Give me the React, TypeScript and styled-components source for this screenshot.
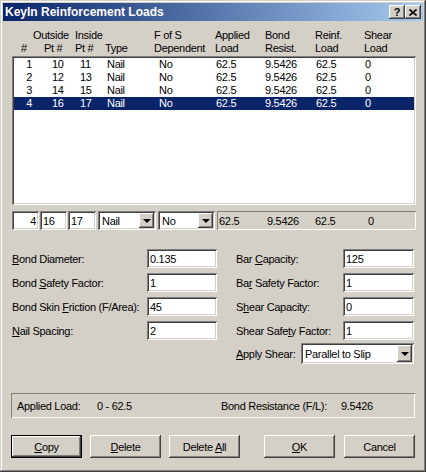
import { FC, ReactNode } from 'react'
import styled, { createGlobalStyle } from 'styled-components'

const GlobalStyle = createGlobalStyle`
  html, body {
    margin: 0;
    padding: 0;
    background: #d4d0c8;
  }
  body {
    font-family: 'Liberation Sans', Arial, sans-serif;
    font-size: 11px;
    letter-spacing: -0.3px;
    color: #000;
  }
`

const raised =
  'inset -1px -1px 0 #404040, inset 1px 1px 0 #fff, inset -2px -2px 0 #808080, inset 2px 2px 0 #d4d0c8'
const sunken =
  'inset 1px 1px 0 #808080, inset -1px -1px 0 #fff, inset 2px 2px 0 #404040, inset -2px -2px 0 #d4d0c8'

type Column = {
  width: number
  head: [string, string]
  headIndent: [number, number]
  cellIndent: number
  alignRight?: boolean
}

const columns: Column[] = [
  { width: 19, head: ['', '#'], headIndent: [0, 7], cellIndent: 1, alignRight: true },
  { width: 42, head: ['Outside', 'Pt #'], headIndent: [0, 11], cellIndent: 19 },
  { width: 30, head: ['Inside', 'Pt #'], headIndent: [0, 0], cellIndent: 5 },
  { width: 49, head: ['', 'Type'], headIndent: [0, 0], cellIndent: 2 },
  { width: 61, head: ['F of S', 'Dependent'], headIndent: [0, 0], cellIndent: 5 },
  { width: 49, head: ['Applied', 'Load'], headIndent: [0, 0], cellIndent: 1 },
  { width: 50, head: ['Bond', 'Resist.'], headIndent: [1, 1], cellIndent: 1 },
  { width: 49, head: ['Reinf.', 'Load'], headIndent: [1, 1], cellIndent: 2 },
  { width: 51, head: ['Shear', 'Load'], headIndent: [1, 1], cellIndent: 2 },
]

const rows = [
  ['1', '10', '11', 'Nail', 'No', '62.5', '9.5426', '62.5', '0'],
  ['2', '12', '13', 'Nail', 'No', '62.5', '9.5426', '62.5', '0'],
  ['3', '14', '15', 'Nail', 'No', '62.5', '9.5426', '62.5', '0'],
  ['4', '16', '17', 'Nail', 'No', '62.5', '9.5426', '62.5', '0'],
]
const selectedRow = 3

const Window = styled.div`
  width: 426px;
  height: 472px;
  box-sizing: border-box;
  padding: 3px;
  background: #d4d0c8;
  box-shadow: inset -1px -1px 0 #404040, inset 1px 1px 0 #d4d0c8, inset -2px -2px 0 #808080,
    inset 2px 2px 0 #fff;
  display: flex;
  flex-direction: column;
`

const TitleBar = styled.div`
  height: 18px;
  display: flex;
  align-items: center;
  padding: 0 2px;
  background: linear-gradient(to right, #0a246a, #a6caf0);
  color: #fff;
  font-weight: bold;
  font-size: 12px;
  letter-spacing: 0;
`

const Title = styled.span`
  flex: 1;
`

const CaptionButton = styled.div`
  width: 16px;
  height: 14px;
  box-sizing: border-box;
  background: #d4d0c8;
  box-shadow: ${raised};
  display: flex;
  align-items: center;
  justify-content: center;
  color: #000;
  font-size: 11px;
  font-weight: bold;
`

const Body = styled.div`
  padding: 0 7px 0 9px;
  display: flex;
  flex-direction: column;
`

const ColumnHeader = styled.div`
  display: flex;
  margin-top: 8px;
  padding-left: 2px;
  line-height: 13px;
`

const HeadCell = styled.div<{ $width: number }>`
  width: ${p => p.$width}px;
  display: flex;
  flex-direction: column;
  white-space: nowrap;
`

const HeadLine = styled.span<{ $indent: number }>`
  height: 13px;
  padding-left: ${p => p.$indent}px;
`

const ListBox = styled.div`
  margin-top: 1px;
  width: 404px;
  height: 149px;
  box-sizing: border-box;
  padding: 2px;
  background: #fff;
  box-shadow: ${sunken};
`

const ListRow = styled.div<{ $selected: boolean }>`
  display: flex;
  height: 13px;
  line-height: 13px;
  background: ${p => (p.$selected ? '#0a246a' : 'transparent')};
  color: ${p => (p.$selected ? '#fff' : '#000')};
`

const ListCell = styled.div<{ $width: number; $indent: number; $right?: boolean }>`
  width: ${p => p.$width}px;
  box-sizing: border-box;
  white-space: nowrap;
  text-align: ${p => (p.$right ? 'right' : 'left')};
  padding-left: ${p => (p.$right ? 0 : p.$indent)}px;
  padding-right: ${p => (p.$right ? p.$indent : 0)}px;
`

const EditRow = styled.div`
  display: flex;
  gap: 1px;
  margin-top: 6px;
  height: 19px;
`

const Edit = styled.div<{ $width: number; $right?: boolean; $height?: number }>`
  width: ${p => p.$width}px;
  height: ${p => p.$height ?? 19}px;
  box-sizing: border-box;
  padding: 0 3px;
  background: #fff;
  box-shadow: ${sunken};
  display: flex;
  align-items: center;
  justify-content: ${p => (p.$right ? 'flex-end' : 'flex-start')};
  white-space: nowrap;
`

const ComboBox = styled.div<{ $width: number; $height: number; $gap?: number }>`
  width: ${p => p.$width}px;
  height: ${p => p.$height}px;
  margin-left: ${p => p.$gap ?? 0}px;
  box-sizing: border-box;
  padding: 2px;
  background: #fff;
  box-shadow: ${sunken};
  display: flex;
`

const ComboText = styled.span`
  flex: 1;
  padding-left: 2px;
  display: flex;
  align-items: center;
  white-space: nowrap;
  overflow: hidden;
`

const DropButton = styled.div`
  width: 15px;
  box-sizing: border-box;
  background: #d4d0c8;
  box-shadow: ${raised};
  display: flex;
  align-items: center;
  justify-content: center;
`

const Arrow = styled.span`
  width: 0;
  height: 0;
  border-left: 4px solid transparent;
  border-right: 4px solid transparent;
  border-top: 4px solid #000;
  margin-top: 1px;
`

const ValueStrip = styled.div`
  margin-left: 1px;
  width: 199px;
  box-sizing: border-box;
  padding-left: 2px;
  box-shadow: inset 1px 1px 0 #808080, inset -1px -1px 0 #fff;
  display: grid;
  grid-template-columns: 48px 48px 53px auto;
  align-items: center;
`

const Fields = styled.div`
  display: flex;
  gap: 19px;
  margin-top: 19px;
`

const FieldColumn = styled.div<{ $width: number }>`
  width: ${p => p.$width}px;
  display: flex;
  flex-direction: column;
  gap: 5px;
`

const FieldRow = styled.div<{ $pull?: number }>`
  display: flex;
  align-items: center;
  justify-content: space-between;
  margin-top: ${p => -(p.$pull ?? 0)}px;
  white-space: nowrap;
`

const StatusPanel = styled.div`
  margin: 29px 0 0 -1px;
  width: 404px;
  height: 25px;
  box-sizing: border-box;
  padding-left: 6px;
  box-shadow: inset 1px 1px 0 #808080, inset -1px -1px 0 #fff;
  display: flex;
  align-items: center;
  white-space: nowrap;
`

const StatusItem = styled.span<{ $width?: number }>`
  width: ${p => (p.$width ? `${p.$width}px` : 'auto')};
`

const ButtonBar = styled.div`
  margin: 17px 0 0 -1px;
  width: 404px;
  display: flex;
  justify-content: space-between;
`

const ButtonGroup = styled.div<{ $gap: number }>`
  display: flex;
  gap: ${p => p.$gap}px;
`

const PushButton = styled.div<{ $default?: boolean }>`
  width: 71px;
  height: 23px;
  box-sizing: border-box;
  background: #d4d0c8;
  border: ${p => (p.$default ? '1px solid #000' : 'none')};
  box-shadow: ${raised};
  display: flex;
  align-items: center;
  justify-content: center;
`

type ComboProps = { width: number; height: number; gap?: number; children: ReactNode }

const Combo: FC<ComboProps> = ({ width, height, gap, children }) => (
  <ComboBox $width={width} $height={height} $gap={gap}>
    <ComboText>{children}</ComboText>
    <DropButton>
      <Arrow />
    </DropButton>
  </ComboBox>
)

const CloseGlyph: FC = () => (
  <svg width="8" height="7" viewBox="0 0 8 7">
    <path d="M0.5 0.5 L7.5 6.5 M7.5 0.5 L0.5 6.5" stroke="#000" strokeWidth="1.6" fill="none" />
  </svg>
)

const App: FC = () => (
  <>
    <GlobalStyle />
    <Window>
      <TitleBar>
        <Title>KeyIn Reinforcement Loads</Title>
        <CaptionButton>?</CaptionButton>
        <CaptionButton>
          <CloseGlyph />
        </CaptionButton>
      </TitleBar>
      <Body>
        <ColumnHeader>
          {columns.map((col, i) => (
            <HeadCell key={i} $width={col.width}>
              <HeadLine $indent={col.headIndent[0]}>{col.head[0]}</HeadLine>
              <HeadLine $indent={col.headIndent[1]}>{col.head[1]}</HeadLine>
            </HeadCell>
          ))}
        </ColumnHeader>
        <ListBox>
          {rows.map((row, r) => (
            <ListRow key={r} $selected={r === selectedRow}>
              {row.map((value, c) => (
                <ListCell
                  key={c}
                  $width={columns[c].width}
                  $indent={columns[c].cellIndent}
                  $right={columns[c].alignRight}
                >
                  {value}
                </ListCell>
              ))}
            </ListRow>
          ))}
        </ListBox>
        <EditRow>
          <Edit $width={27} $right>
            4
          </Edit>
          <Edit $width={27}>16</Edit>
          <Edit $width={28}>17</Edit>
          <Combo width={58} height={19} gap={1}>
            Nail
          </Combo>
          <Combo width={57} height={19} gap={1}>
            No
          </Combo>
          <ValueStrip>
            <span>62.5</span>
            <span>9.5426</span>
            <span>62.5</span>
            <span>0</span>
          </ValueStrip>
        </EditRow>
        <Fields>
          <FieldColumn $width={205}>
            <FieldRow>
              <span>
                <u>B</u>ond Diameter:
              </span>
              <Edit $width={70}>0.135</Edit>
            </FieldRow>
            <FieldRow>
              <span>
                Bond <u>S</u>afety Factor:
              </span>
              <Edit $width={70}>1</Edit>
            </FieldRow>
            <FieldRow>
              <span>
                Bond Skin <u>F</u>riction (F/Area):
              </span>
              <Edit $width={70}>45</Edit>
            </FieldRow>
            <FieldRow>
              <span>
                <u>N</u>ail Spacing:
              </span>
              <Edit $width={70}>2</Edit>
            </FieldRow>
          </FieldColumn>
          <FieldColumn $width={178}>
            <FieldRow>
              <span>
                Bar <u>C</u>apacity:
              </span>
              <Edit $width={71}>125</Edit>
            </FieldRow>
            <FieldRow>
              <span>
                Ba<u>r</u> Safety Factor:
              </span>
              <Edit $width={71}>1</Edit>
            </FieldRow>
            <FieldRow>
              <span>
                S<u>h</u>ear Capacity:
              </span>
              <Edit $width={71}>0</Edit>
            </FieldRow>
            <FieldRow>
              <span>
                Shear Safe<u>t</u>y Factor:
              </span>
              <Edit $width={71}>1</Edit>
            </FieldRow>
            <FieldRow $pull={2}>
              <span>
                <u>A</u>pply Shear:
              </span>
              <Combo width={113} height={21}>
                Parallel to Slip
              </Combo>
            </FieldRow>
          </FieldColumn>
        </Fields>
        <StatusPanel>
          <StatusItem $width={80}>Applied Load:</StatusItem>
          <StatusItem $width={124}>0 - 62.5</StatusItem>
          <StatusItem $width={120}>Bond Resistance (F/L):</StatusItem>
          <StatusItem>9.5426</StatusItem>
        </StatusPanel>
        <ButtonBar>
          <ButtonGroup $gap={8}>
            <PushButton $default>
              <span>
                <u>C</u>opy
              </span>
            </PushButton>
            <PushButton>
              <span>
                <u>D</u>elete
              </span>
            </PushButton>
            <PushButton>
              <span>
                Delete <u>A</u>ll
              </span>
            </PushButton>
          </ButtonGroup>
          <ButtonGroup $gap={9}>
            <PushButton>
              <span>
                <u>O</u>K
              </span>
            </PushButton>
            <PushButton>Cancel</PushButton>
          </ButtonGroup>
        </ButtonBar>
      </Body>
    </Window>
  </>
)

export default App
